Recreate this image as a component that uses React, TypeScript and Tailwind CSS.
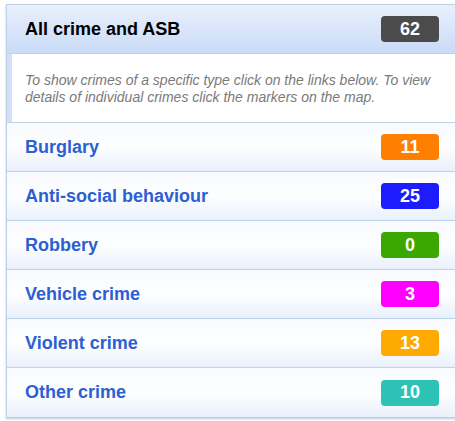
import React from "react";

const rows = [
  { name: "Burglary", count: 11, color: "bg-[#ff7f00]" },
  { name: "Anti-social behaviour", count: 25, color: "bg-[#1c1cff]" },
  { name: "Robbery", count: 0, color: "bg-[#3aa800]" },
  { name: "Vehicle crime", count: 3, color: "bg-[#ff00ff]" },
  { name: "Violent crime", count: 13, color: "bg-[#ffaa00]" },
  { name: "Other crime", count: 10, color: "bg-[#2ec1b6]" },
];

export default function App() {
  return (
    <div
      className="w-[455px] h-[421px] overflow-hidden bg-white pt-[4px] pl-[6px]"
      style={{ fontFamily: '"Liberation Sans", Arial, sans-serif' }}
    >
      <div className="w-[460px] border-l border-t border-b border-[#bcd2e7] shadow-[0_1px_2px_rgba(120,150,180,0.5)]">
        <div className="h-[49px] flex items-center justify-between pl-[18px] pr-[27px] border-b border-[#bcd2e7] bg-gradient-to-b from-[#e9f0fc] to-[#cadbf7]">
          <span className="text-[18px] font-bold text-black">All crime and ASB</span>
          <span className="w-[58px] h-[26px] rounded-[4px] bg-[#4b4b4b] text-white font-bold text-[18px] flex items-center justify-center">
            62
          </span>
        </div>
        <div className="h-[69px] flex border-b border-[#bcd2e7] bg-white">
          <div className="w-[5px] bg-[#d4e0f8]" />
          <p className="pl-[13px] pt-[18px] text-[14px] leading-[17px] italic text-[#7a7a7a] w-[425px]">
            To show crimes of a specific type click on the links below. To view details of individual crimes click the markers on the map.
          </p>
        </div>
        {rows.map((r, i) => (
          <div
            key={r.name}
            className={`h-[49px] flex items-center justify-between pl-[18px] pr-[27px] bg-gradient-to-b from-[#f8fafe] via-[#fdfeff] to-[#eaf0fb] ${
              i < rows.length - 1 ? "border-b border-[#bcd2e7]" : "h-[48px]"
            }`}
          >
            <span className="text-[18px] font-bold text-[#2b5fd3]">{r.name}</span>
            <span
              className={`w-[58px] h-[26px] rounded-[4px] ${r.color} text-white font-bold text-[18px] flex items-center justify-center`}
            >
              {r.count}
            </span>
          </div>
        ))}
      </div>
    </div>
  );
}
